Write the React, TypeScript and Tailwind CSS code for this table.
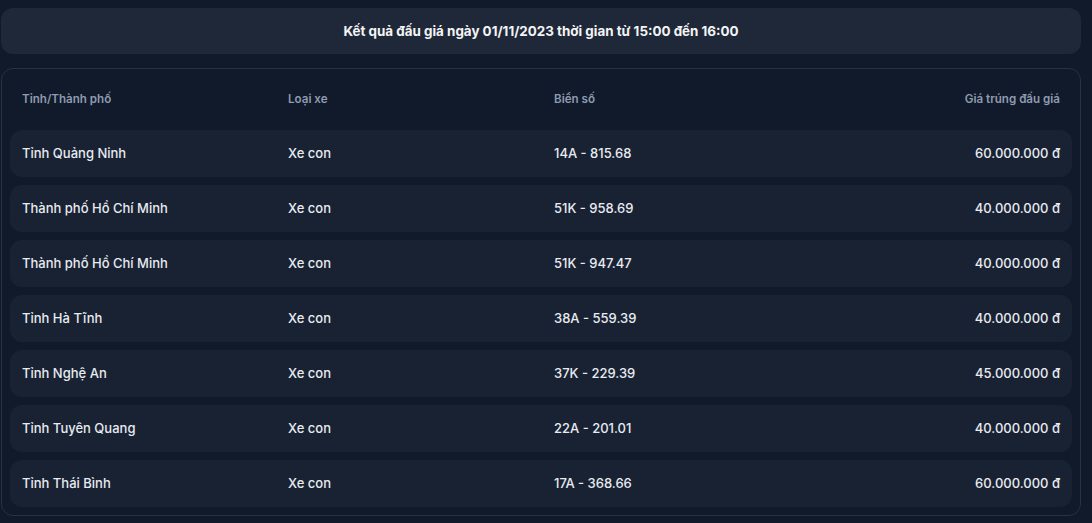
const rows = [
  { city: 'Tỉnh Quảng Ninh', type: 'Xe con', plate: '14A - 815.68', price: '60.000.000 đ' },
  { city: 'Thành phố Hồ Chí Minh', type: 'Xe con', plate: '51K - 958.69', price: '40.000.000 đ' },
  { city: 'Thành phố Hồ Chí Minh', type: 'Xe con', plate: '51K - 947.47', price: '40.000.000 đ' },
  { city: 'Tỉnh Hà Tĩnh', type: 'Xe con', plate: '38A - 559.39', price: '40.000.000 đ' },
  { city: 'Tỉnh Nghệ An', type: 'Xe con', plate: '37K - 229.39', price: '45.000.000 đ' },
  { city: 'Tỉnh Tuyên Quang', type: 'Xe con', plate: '22A - 201.01', price: '40.000.000 đ' },
  { city: 'Tỉnh Thái Bình', type: 'Xe con', plate: '17A - 368.66', price: '60.000.000 đ' },
]

export default function App() {
  return (
    <div className="min-h-[523px] bg-[#111a2a] pt-2 pl-[1px] font-['Inter',sans-serif]">
      <div className="w-[1080px] space-y-[14px]">
        <div className="h-[46px] rounded-xl bg-[#1f2838] flex items-center justify-center">
          <h1 className="text-[13.4px] font-bold text-gray-100">Kết quả đấu giá ngày 01/11/2023 thời gian từ 15:00 đến 16:00</h1>
        </div>

        {/* result table */}
        <div className="rounded-xl border border-[#273142] bg-[#111a2a] px-2 pt-2 pb-2">
          <div className="h-[45px] px-3 grid grid-cols-[266px_266px_1fr_auto] items-center text-[11.6px] font-semibold text-[#8f9bb0]">
            <span>Tỉnh/Thành phố</span>
            <span>Loại xe</span>
            <span>Biển số</span>
            <span className="text-right">Giá trúng đấu giá</span>
          </div>
          <div className="mt-2 space-y-2">
            {rows.map((r, i) => (
              <div key={i} className="h-[47px] px-3 rounded-xl bg-[#192233] grid grid-cols-[266px_266px_1fr_auto] items-center text-[13px] font-medium text-[#e8ebf0] leading-none">
                <span>{r.city}</span>
                <span>{r.type}</span>
                <span>{r.plate}</span>
                <span className="text-right">{r.price}</span>
              </div>
            ))}
          </div>
        </div>
      </div>
    </div>
  )
}
